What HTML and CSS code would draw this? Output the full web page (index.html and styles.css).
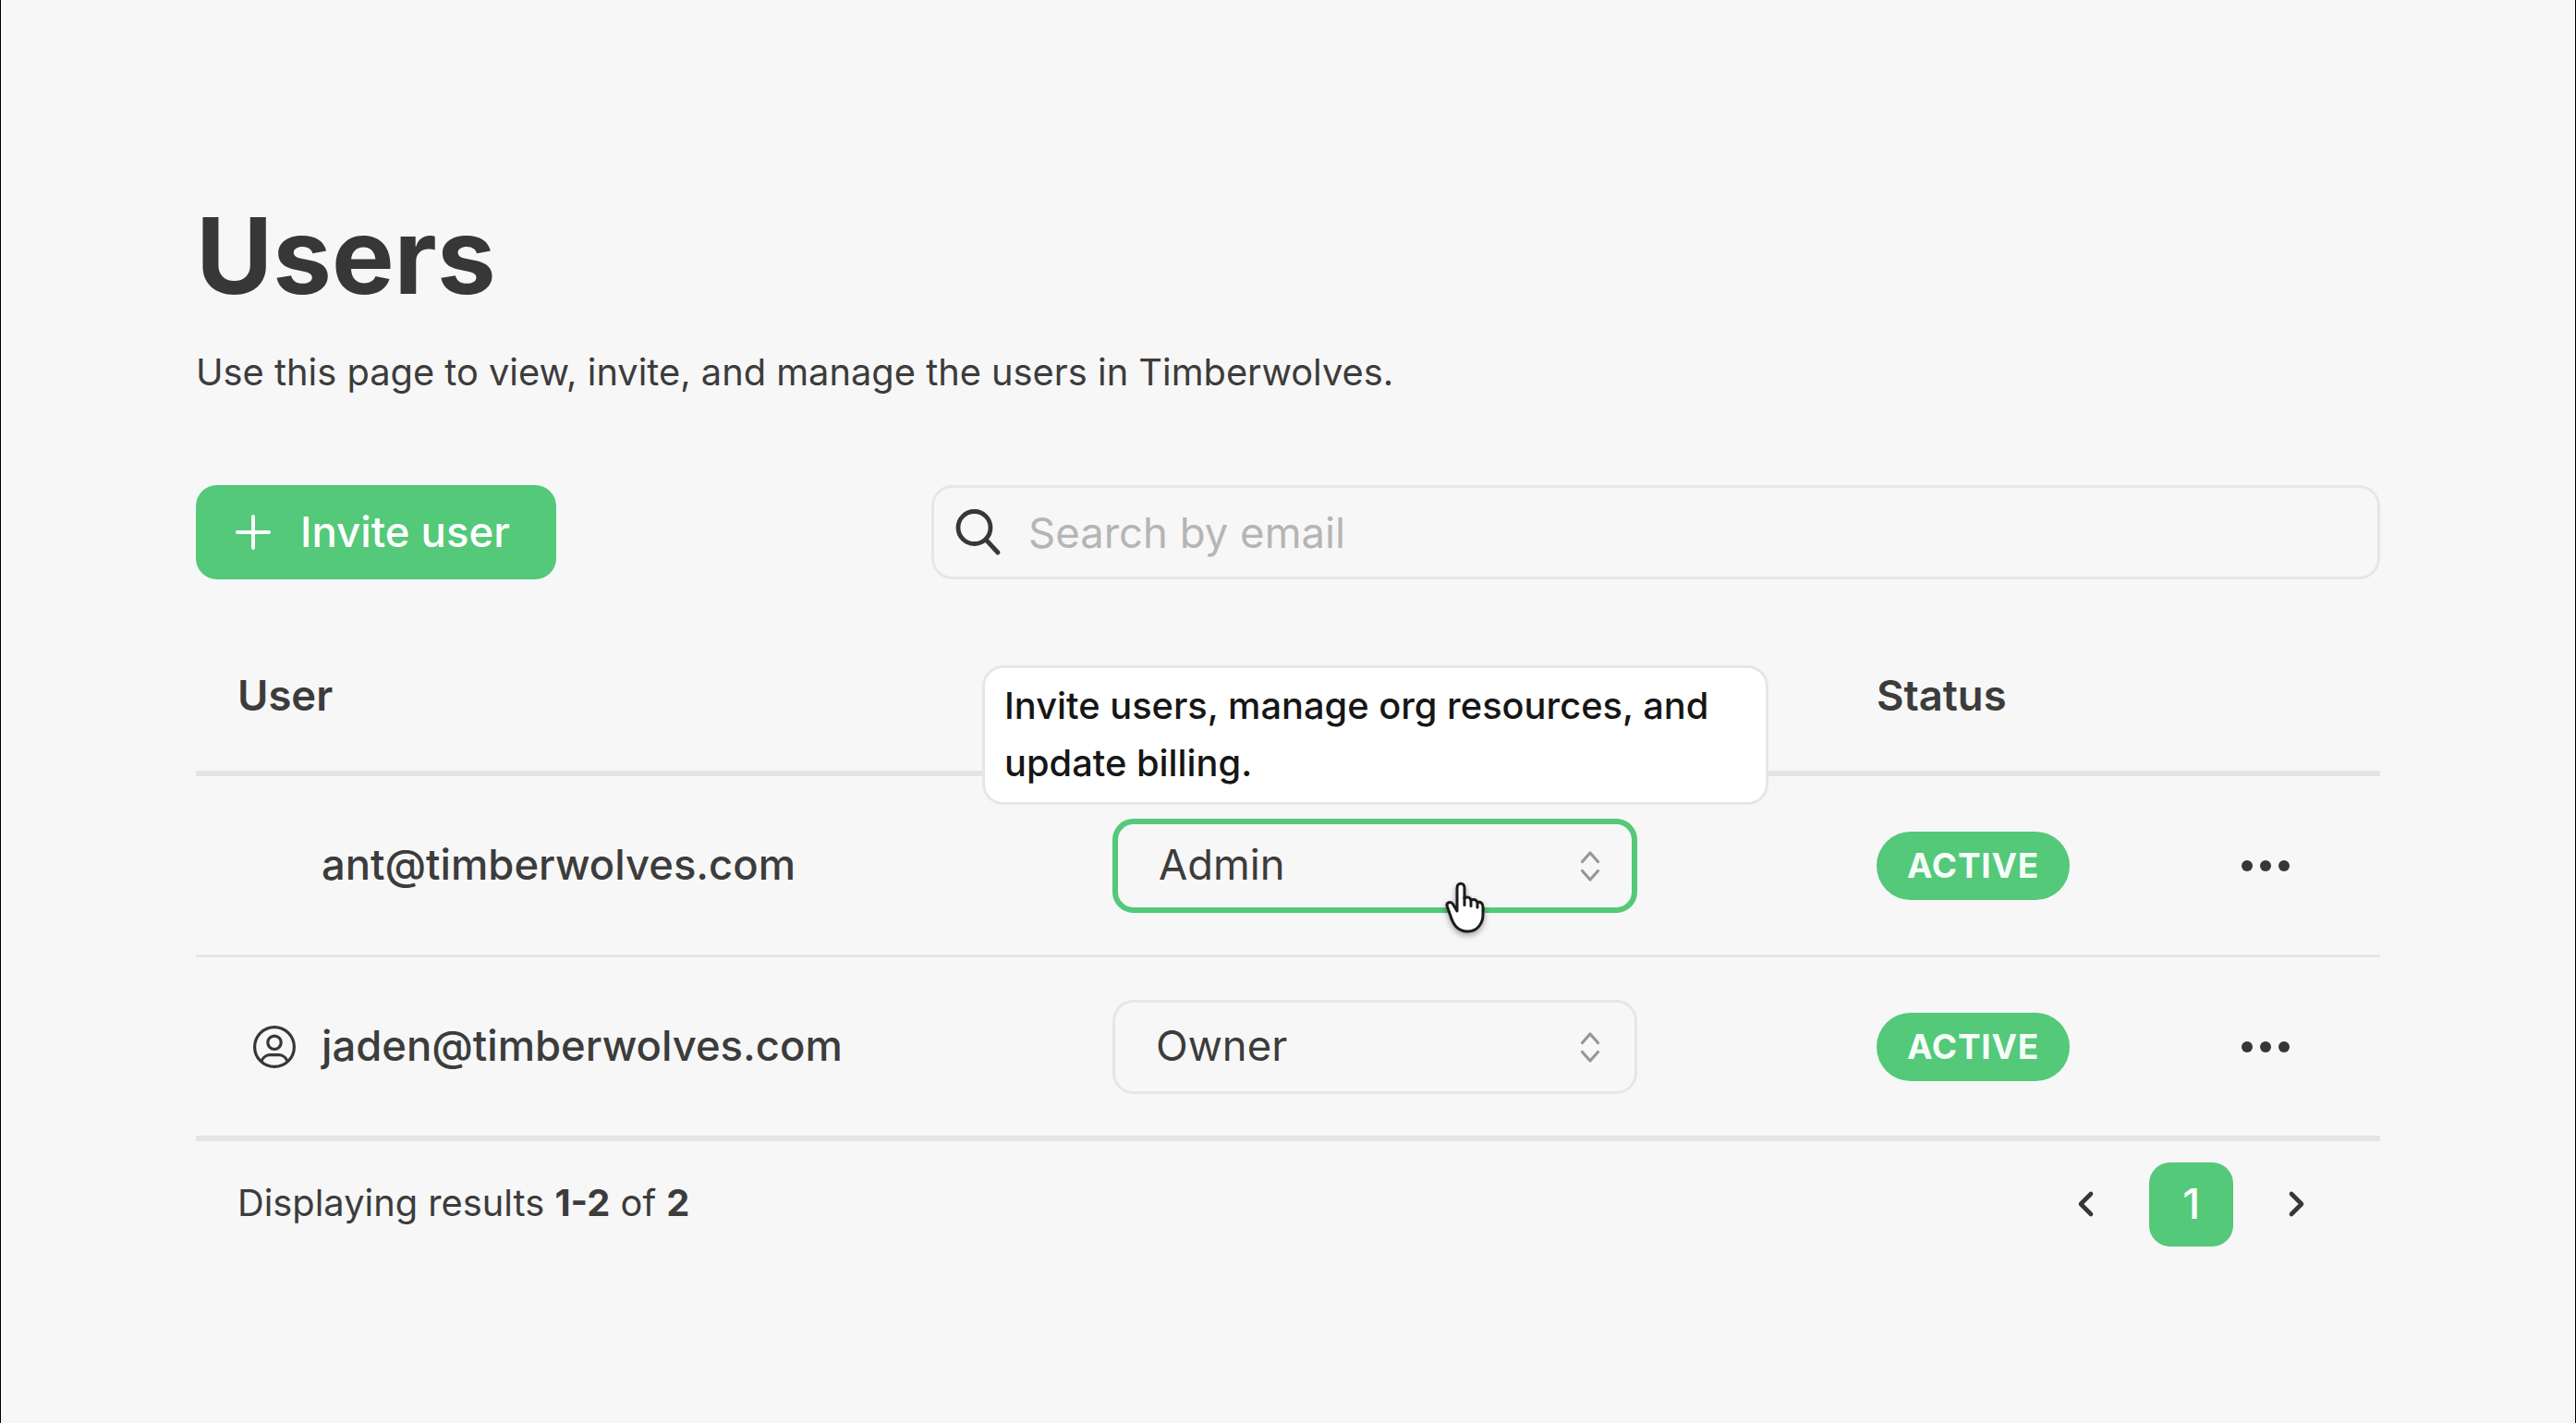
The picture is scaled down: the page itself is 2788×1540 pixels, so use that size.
FILE: index.html
```
<!DOCTYPE html>
<html lang="en">
	<head>
		<meta charset="UTF-8">
		<title>Users</title>
		<link rel="stylesheet" href="styles.css">
	</head>
	<body>
		<main class="page">
			<h1>Users</h1>
			<p class="intro">Use this page to view, invite, and manage the users in Timberwolves.</p>

			<div class="toolbar">
				<button class="invite">
					<svg class="plus" viewBox="0 0 38 38"><path d="M19 2v34M2 19h34"/></svg>
					<span>Invite user</span>
				</button>
				<label class="search">
					<svg class="glass" viewBox="0 0 50 56"><circle cx="20.5" cy="23" r="17.5"/><path d="M33 36L46 50"/></svg>
					<input type="text" placeholder="Search by email">
				</label>
			</div>

			<div class="table">
				<div class="row head">
					<div class="user">User</div>
					<div class="role"></div>
					<div class="status">Status</div>
				</div>
				<div class="row">
					<div class="user"><i class="me"></i><span>ant@timberwolves.com</span></div>
					<div class="role">
						<div class="select focus">
							<span>Admin</span>
							<svg class="updown" viewBox="0 0 24 36"><path d="M3.5 13.5L12 4l8.5 9.5M3.5 23.5L12 33l8.5-9.5"/></svg>
							<svg class="cursor" viewBox="0 0 80 80">
								<path d="M27 45V20c0-6.5 8-6.5 8 0v11c3-2 6-1 7 2 3-1.5 6 0 7 2.500 4-1 6 1.500 6 5V49c0 9-6 18-16.500 18C27 67 22.500 59 19.500 49L16.300 40c-1.500-4.500 4-6 6.200-2.500z"/>
								<path class="fingers" d="M35 30v8.500M42 33v6.500M49 36v5"/>
							</svg>
							<div class="tooltip">Invite users, manage org resources, and update billing.</div>
						</div>
					</div>
					<div class="status"><span class="badge">ACTIVE</span></div>
					<div class="more"><svg class="dots" viewBox="0 0 52 12"><circle cx="6" cy="6" r="6"/><circle cx="26" cy="6" r="6"/><circle cx="46" cy="6" r="6"/></svg></div>
				</div>
				<div class="row last">
					<div class="user">
						<i class="me"><svg viewBox="0 0 46 46"><circle cx="23" cy="23" r="21.4"/><circle cx="23" cy="18.3" r="7.2"/><path d="M9 38c2-4 6-6.300 9-6.300h10c3 0 7 2.300 9 6.300"/></svg></i>
						<span>jaden@timberwolves.com</span>
					</div>
					<div class="role">
						<div class="select">
							<span>Owner</span>
							<svg class="updown" viewBox="0 0 24 36"><path d="M3.5 13.5L12 4l8.5 9.5M3.5 23.5L12 33l8.5-9.5"/></svg>
						</div>
					</div>
					<div class="status"><span class="badge">ACTIVE</span></div>
					<div class="more"><svg class="dots" viewBox="0 0 52 12"><circle cx="6" cy="6" r="6"/><circle cx="26" cy="6" r="6"/><circle cx="46" cy="6" r="6"/></svg></div>
				</div>
			</div>

			<div class="footer">
				<div class="results">Displaying results <b>1-2</b> of <b>2</b></div>
				<div class="pages">
					<a class="arrow"><svg viewBox="0 0 20 30"><path d="M15 4L4 15l11 11"/></svg></a>
					<a class="active">1</a>
					<a class="arrow"><svg viewBox="0 0 20 30"><path d="M4 4l11 11L4 26"/></svg></a>
				</div>
			</div>
		</main>
	</body>
</html>
```

FILE: styles.css
```
*{box-sizing: border-box;}
body{
	margin: 0;
	height: 1540px;
	border-left: 1px solid #000;
	border-right: 1px solid #000;
	background-color: #f7f7f7;
	font-family: Inter, sans-serif;
	color: #3c3c3c;
}
svg{
	display: block;
	flex: none;
	overflow: visible;
	fill: none;
	stroke: #373737;
	stroke-linecap: round;
	stroke-linejoin: round;
}
.page{
	width: 2364px;
	margin-left: 211px;
	padding-top: 203px;
}
h1{
	margin: 0;
	font-size: 113.7px;
	line-height: 148px;
	font-weight: 700;
	color: #373737;
}
.intro{
	margin: 21px 0 0;
	font-size: 39.8px;
	line-height: 62px;
	white-space: nowrap;
}
.toolbar{
	display: flex;
	justify-content: space-between;
	margin-top: 91px;
}
.invite{
	display: flex;
	align-items: center;
	width: 390px;
	height: 102px;
	padding: 0 0 0 43px;
	border: none;
	border-radius: 22.7px;
	background-color: #53c979;
	color: #fff;
	font: 500 45.5px Inter, sans-serif;
}
.invite span{padding-bottom: 2px;}
.plus{
	width: 38px;
	height: 38px;
	margin-right: 32px;
	stroke: #fff;
	stroke-width: 4;
}
.search{
	display: flex;
	align-items: center;
	width: 1568px;
	height: 102px;
	border: 3px solid #e6e6e6;
	border-radius: 22.7px;
	padding-left: 23px;
}
.glass{
	width: 50px;
	height: 56px;
	stroke-width: 4.8;
}
.search input{
	flex: 1;
	margin-left: 29px;
	padding: 0;
	border: none;
	outline: none;
	background: none;
	font: 45.5px Inter, sans-serif;
	color: #3c3c3c;
}
.search input::placeholder{color: #b5b5b5;}

.table{margin-top: 46px;}
.row{
	display: grid;
	grid-template-columns: 992px 827px 400px 1fr;
	align-items: center;
	height: 196px;
	border-bottom: 3px solid #e6e6e6;
	font-size: 45.4px;
}
.row.head{
	height: 167px;
	padding-bottom: 2px;
	border-bottom: 6px solid #e4e4e4;
	font-weight: 600;
}
.row.last{
	height: 199px;
	border-bottom: 6px solid #e4e4e4;
}
.user{
	display: flex;
	align-items: center;
	padding-left: 45px;
	font-weight: 500;
}
.user span{padding-bottom: 2px;}
.head .user{font-weight: 600;}
.me{
	width: 46px;
	height: 46px;
	margin: 0 28px 0 17px;
}
.me svg{stroke-width: 3.2;}
.select{
	position: relative;
	display: flex;
	align-items: center;
	justify-content: space-between;
	width: 568px;
	height: 102px;
	padding: 0 36px 0 44px;
	border: 3px solid #e6e6e6;
	border-radius: 22.7px;
}
.select span{padding-bottom: 2px;}
.select.focus{
	padding: 0 33px 0 44px;
	border: 6px solid #53c979;
}
.updown{
	width: 24px;
	height: 36px;
	stroke: #96979b;
	stroke-width: 3.2;
}
.tooltip{
	position: absolute;
	left: -147px;
	top: -172px;
	width: 851px;
	height: 151px;
	padding: 10px 21px;
	border: 3px solid #e6e6e6;
	border-radius: 22.7px;
	background-color: #fff;
	color: #161616;
	font-size: 39.8px;
	line-height: 62px;
	font-weight: 500;
}
.cursor{
	position: absolute;
	left: 340px;
	top: 49px;
	width: 80px;
	height: 80px;
	fill: #fff;
	stroke: #1c1c1c;
	stroke-width: 3;
	filter: drop-shadow(0 3px 3px rgba(0,0,0,.35));
}
.badge{
	display: block;
	width: 209px;
	height: 74px;
	border-radius: 37px;
	background-color: #53c979;
	color: #f7fdf9;
	font-size: 37px;
	line-height: 73px;
	font-weight: 700;
	letter-spacing: .7px;
	text-align: center;
}
.dots{
	width: 52px;
	height: 12px;
	margin-left: -5px;
	fill: #373737;
	stroke: none;
}

.footer{
	display: flex;
	justify-content: space-between;
	align-items: center;
	margin-top: 22px;
	height: 92px;
	padding: 0 45px;
}
.results{
	padding-bottom: 3px;
	font-size: 39.8px;
}
.pages{
	display: flex;
	gap: 22.7px;
}
.pages a{
	display: flex;
	align-items: center;
	justify-content: center;
	width: 91px;
	height: 91px;
	border-radius: 22.7px;
	padding-bottom: 1px;
	font-size: 45.5px;
}
.pages .active{
	background-color: #53c979;
	color: #fff;
	font-weight: 500;
}
.arrow svg{
	width: 20px;
	height: 30px;
	stroke-width: 4.6;
}
```
